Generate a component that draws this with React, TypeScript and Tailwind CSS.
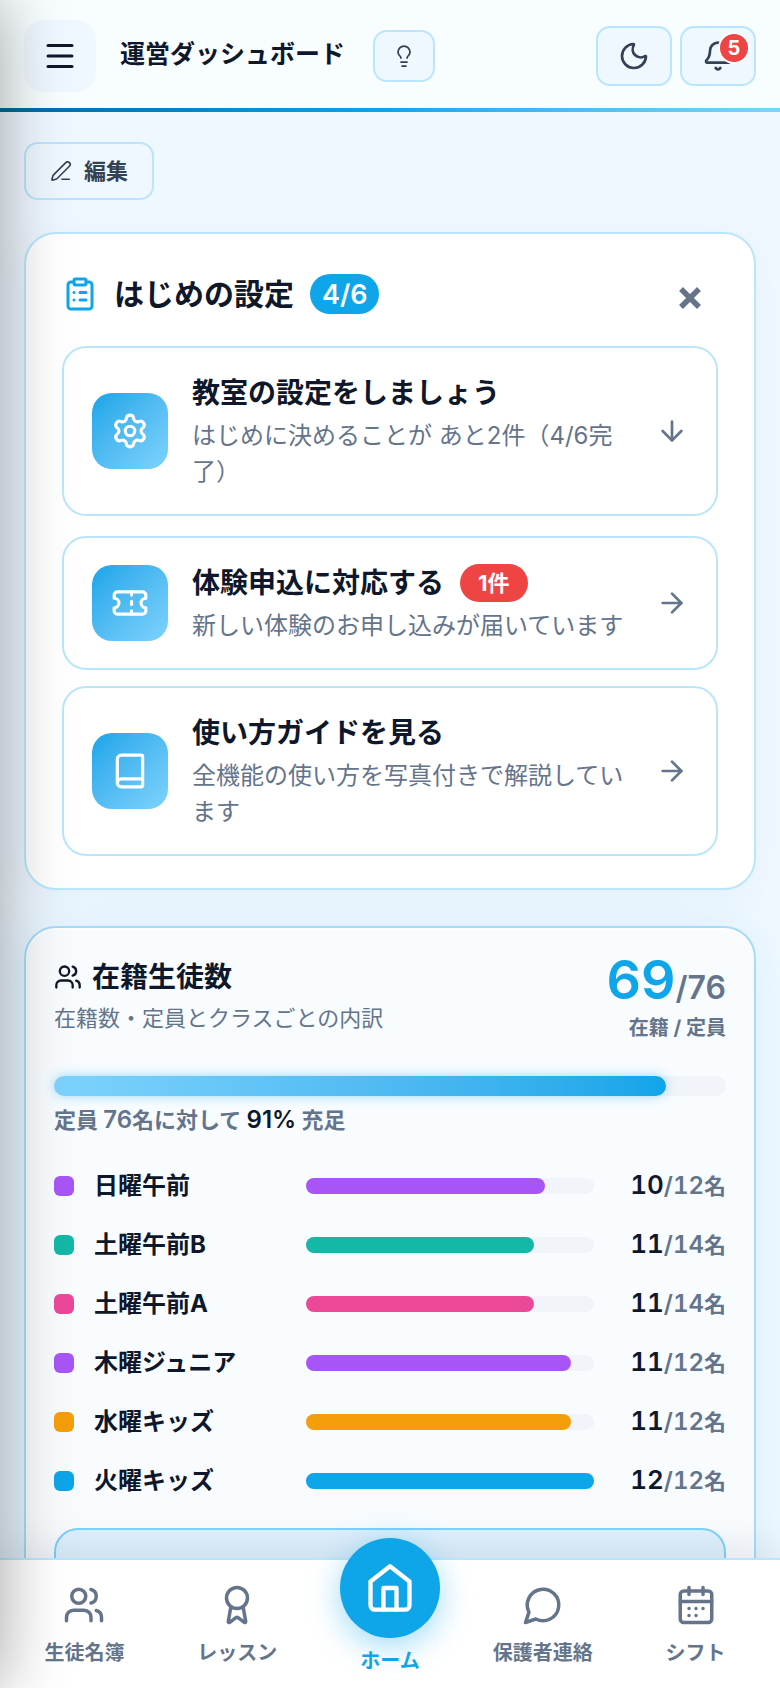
import type { ReactNode } from 'react';
import {
  ArrowDown,
  ArrowRight,
  Award,
  Bell,
  Book,
  ClipboardList,
  Lightbulb,
  Menu,
  Moon,
  PenLine,
  Settings,
  Ticket,
  Users,
} from 'lucide-react';

const setupTasks = [
  {
    id: 'classroom',
    title: '教室の設定をしましょう',
    description: 'はじめに決めることが あと2件（4/6完了）',
    icon: Settings,
    arrow: ArrowDown,
    expandable: true,
  },
  {
    id: 'trial',
    title: '体験申込に対応する',
    description: '新しい体験のお申し込みが届いています',
    badge: '1件',
    icon: Ticket,
    arrow: ArrowRight,
  },
  {
    id: 'guide',
    title: '使い方ガイドを見る',
    description: '全機能の使い方を写真付きで解説しています',
    icon: Book,
    arrow: ArrowRight,
  },
];

const classes = [
  { name: '日曜午前', count: 10, capacity: 12, fill: 83, color: 'bg-[#a855f7]' },
  { name: '土曜午前B', count: 11, capacity: 14, fill: 79, color: 'bg-[#14b8a6]' },
  { name: '土曜午前A', count: 11, capacity: 14, fill: 79, color: 'bg-[#ec4899]' },
  { name: '木曜ジュニア', count: 11, capacity: 12, fill: 92, color: 'bg-[#a855f7]' },
  { name: '水曜キッズ', count: 11, capacity: 12, fill: 92, color: 'bg-[#f59e0b]' },
  { name: '火曜キッズ', count: 12, capacity: 12, fill: 100, color: 'bg-[#0ea5e9]' },
];

function StrokeIcon({ size, children }: { size: number; children: ReactNode }) {
  return (
    <svg
      width={size}
      height={size}
      viewBox="0 0 24 24"
      fill="none"
      stroke="currentColor"
      strokeWidth={2}
      strokeLinecap="round"
      strokeLinejoin="round"
      aria-hidden="true"
    >
      {children}
    </svg>
  );
}

function Header() {
  return (
    <header className="shrink-0">
      <div className="flex items-center bg-[#f8fdff] px-6 pt-5 pb-4">
        <button
          aria-label="メニュー"
          className="flex size-[72px] shrink-0 items-center justify-center rounded-[20px] bg-[#f0f8ff] text-[#0f172a]"
        >
          <Menu size={36} />
        </button>
        <h1 className="ml-6 pb-1 text-[25px] leading-9 font-bold text-[#0f172a]">運営ダッシュボード</h1>
        <button
          aria-label="ヒント"
          className="ml-7 flex h-[52px] w-[62px] items-center justify-center rounded-[14px] border-2 border-[#bae6fd] bg-[#f0f8ff] text-[#334155]"
        >
          <Lightbulb size={24} strokeWidth={1.75} />
        </button>
        <div className="ml-auto flex gap-2">
          <button
            aria-label="ダークモード"
            className="flex h-[60px] w-[76px] items-center justify-center rounded-[14px] border-2 border-[#bae6fd] bg-[#f0f8ff] text-[#334155]"
          >
            <Moon size={32} />
          </button>
          <button
            aria-label="通知"
            className="relative flex h-[60px] w-[76px] items-center justify-center rounded-[14px] border-2 border-[#bae6fd] bg-[#f0f8ff] text-[#334155]"
          >
            <Bell size={32} />
            <span className="absolute top-1 right-1 flex size-8 items-center justify-center rounded-full border-2 border-white bg-[#ef4444] text-xl leading-none font-bold text-white">
              5
            </span>
          </button>
        </div>
      </div>
      <div className="h-1 bg-linear-to-r from-[#0369a1] via-[#0ea5e9] to-[#7dd3fc]" />
    </header>
  );
}

function SetupCard() {
  return (
    <section className="mt-8 rounded-[32px] border-2 border-[#bae6fd] bg-white px-9 py-8 shadow-[0_8px_40px_rgba(14,116,190,0.05)]">
      <div className="mb-6 flex h-14 items-center gap-4">
        <ClipboardList size={36} className="text-[#0ea5e9]" />
        <h2 className="text-3xl leading-none font-bold text-[#0f172a]">はじめの設定</h2>
        <span className="flex h-10 items-center rounded-full bg-[#0ea5e9] px-3 text-[27px] leading-none font-semibold text-white">
          4/6
        </span>
        <button aria-label="閉じる" className="ml-auto flex size-14 items-center justify-center pt-2 text-[#64748b]">
          <svg width="24" height="24" viewBox="0 0 24 24" fill="none" stroke="currentColor" strokeWidth="5.5" aria-hidden="true">
            <path d="M3 3l18 18M21 3L3 21" />
          </svg>
        </button>
      </div>
      <div className="flex flex-col gap-4">
        {setupTasks.map((task) => {
          const Icon = task.icon;
          const Arrow = task.arrow;
          return (
            <button
              key={task.id}
              className={`flex w-full items-center gap-6 rounded-[24px] border-2 border-[#bae6fd] bg-white px-7 py-6 text-left ${
                task.expandable ? 'mb-1' : ''
              }`}
            >
              <span className="flex size-[76px] shrink-0 items-center justify-center rounded-[20px] bg-linear-to-br from-[#0ea5e9] to-[#7dd3fc] text-white">
                <Icon size={38} />
              </span>
              <span className="flex min-w-0 flex-1 flex-col gap-1">
                <span className="flex items-center gap-4 text-[28px] leading-[42px] font-bold text-[#0f172a]">
                  {task.title}
                  {task.badge && (
                    <span className="flex h-[38px] items-center rounded-full bg-[#ef4444] px-[18px] text-[22px] leading-none text-white">
                      {task.badge}
                    </span>
                  )}
                </span>
                <span className="text-2xl leading-9 text-[#64748b]">{task.description}</span>
              </span>
              <Arrow size={32} className="shrink-0 text-[#64748b]" />
            </button>
          );
        })}
      </div>
    </section>
  );
}

function EnrollmentCard() {
  return (
    <section className="mt-9 rounded-[32px] border-2 border-[#a5ddf8] bg-[#f8fcff] p-7 shadow-[inset_0_2px_0_#fff,0_0_48px_rgba(125,211,252,0.2)]">
      <div className="flex justify-between">
        <div>
          <h2 className="flex items-center gap-2.5 text-[28px] leading-[42px] font-bold text-[#0f172a]">
            <Users size={28} />
            在籍生徒数
          </h2>
          <p className="mt-1 text-[22px] leading-8 text-[#64748b]">在籍数・定員とクラスごとの内訳</p>
        </div>
        <div className="text-right font-semibold text-[#64748b]">
          <div className="text-[32px] leading-12">
            <span className="text-[54px] text-[#0ea5e9]">69</span>/76
          </div>
          <div className="text-xl leading-8 font-bold">在籍 / 定員</div>
        </div>
      </div>

      <div className="mt-8 h-5 rounded-full bg-[#f1f4f9]">
        <div
          className="h-full rounded-full bg-linear-to-r from-[#7dd3fc] to-[#0ea5e9] shadow-[0_0_12px_rgba(14,165,233,0.4)]"
          style={{ width: '91%' }}
        />
      </div>
      <p className="mt-2 text-[22px] leading-8 font-bold text-[#64748b]">
        定員 <span className="text-2xl leading-8 font-semibold">76</span>名に対して{' '}
        <strong className="text-2xl leading-8 font-semibold text-[#0f172a]">91%</strong> 充足
      </p>

      <ul className="mt-[30px] flex flex-col gap-5">
        {classes.map((c) => (
          <li key={c.name} className="grid h-[39px] grid-cols-[20px_2fr_3fr_112px] items-center gap-5">
            <span className={`size-5 rounded-md ${c.color}`} />
            <span className="text-2xl leading-9 font-bold text-[#0f172a]">{c.name}</span>
            <span className="h-4 rounded-full bg-[#f1f4f9]">
              <span className={`block h-full rounded-full ${c.color}`} style={{ width: `${c.fill}%` }} />
            </span>
            <span className="text-right text-2xl leading-9 font-semibold whitespace-nowrap text-[#64748b] tabular-nums">
              <span className="text-[26px] text-[#0f172a]">{c.count}</span>/{c.capacity}
              <span className="text-[22px] font-bold">名</span>
            </span>
          </li>
        ))}
      </ul>

      <button className="mt-7 w-full rounded-[24px] border-2 border-[#7dd3fc] bg-[#e0f2fe] py-[22px] text-2xl leading-9 font-bold text-[#0369a1]">
        クラスを管理する
      </button>
    </section>
  );
}

function NavItem({ label, icon }: { label: string; icon: ReactNode }) {
  return (
    <a href="#" className="flex flex-1 flex-col items-center gap-3 pt-6 text-xl leading-[30px] font-bold text-[#64748b]">
      {icon}
      {label}
    </a>
  );
}

function BottomNav() {
  return (
    <nav className="relative z-10 flex h-[130px] shrink-0 border-t-2 border-[#bae6fd] bg-white px-2 shadow-[0_-8px_40px_rgba(15,23,42,0.1)]">
      <NavItem label="生徒名簿" icon={<Users size={42} />} />
      <NavItem label="レッスン" icon={<Award size={42} />} />
      <a
        href="#"
        aria-current="page"
        className="-mt-[22px] flex flex-1 flex-col items-center gap-2 text-xl leading-[30px] font-bold text-[#0ea5e9]"
      >
        <span className="flex size-[100px] items-center justify-center rounded-full bg-[#0ea5e9] text-white shadow-[0_8px_32px_rgba(14,165,233,0.4)]">
          <StrokeIcon size={52}>
            <path d="M3 9l9-7 9 7v11a2 2 0 0 1-2 2H5a2 2 0 0 1-2-2z" />
            <path d="M9 22V12h6v10" />
          </StrokeIcon>
        </span>
        ホーム
      </a>
      <NavItem
        label="保護者連絡"
        icon={
          <StrokeIcon size={42}>
            <path d="M7.9 20A9 9 0 1 0 4 16.1L2 22Z" />
          </StrokeIcon>
        }
      />
      <NavItem
        label="シフト"
        icon={
          <StrokeIcon size={42}>
            <rect x="3" y="4" width="18" height="18" rx="2" />
            <path d="M8 2v4M16 2v4M3 10h18" />
            <path d="M8 14h.01M12 14h.01M16 14h.01M8 18h.01M12 18h.01" />
          </StrokeIcon>
        }
      />
    </nav>
  );
}

export default function App() {
  return (
    <div className="relative flex h-screen flex-col overflow-hidden bg-[#f0f8ff] font-[Inter,'Noto_Sans_CJK_JP',sans-serif]">
      <Header />
      <main className="min-h-0 flex-1 overflow-y-auto px-6 pt-[30px] pb-8 [scrollbar-width:none]">
        <button className="flex h-[58px] items-center gap-3 rounded-[14px] border-2 border-[#bae6fd] bg-[#f0f8ff] px-6 text-[22px] leading-none font-bold text-[#334155]">
          <PenLine size={22} strokeWidth={1.75} />
          編集
        </button>
        <SetupCard />
        <EnrollmentCard />
      </main>
      <BottomNav />
      {/* Closed drawer, its shadow falls on the left edge */}
      <aside className="pointer-events-none absolute inset-y-0 right-full z-20 w-80 bg-white shadow-[0_0_64px_rgba(0,0,0,0.36)]" />
    </div>
  );
}
